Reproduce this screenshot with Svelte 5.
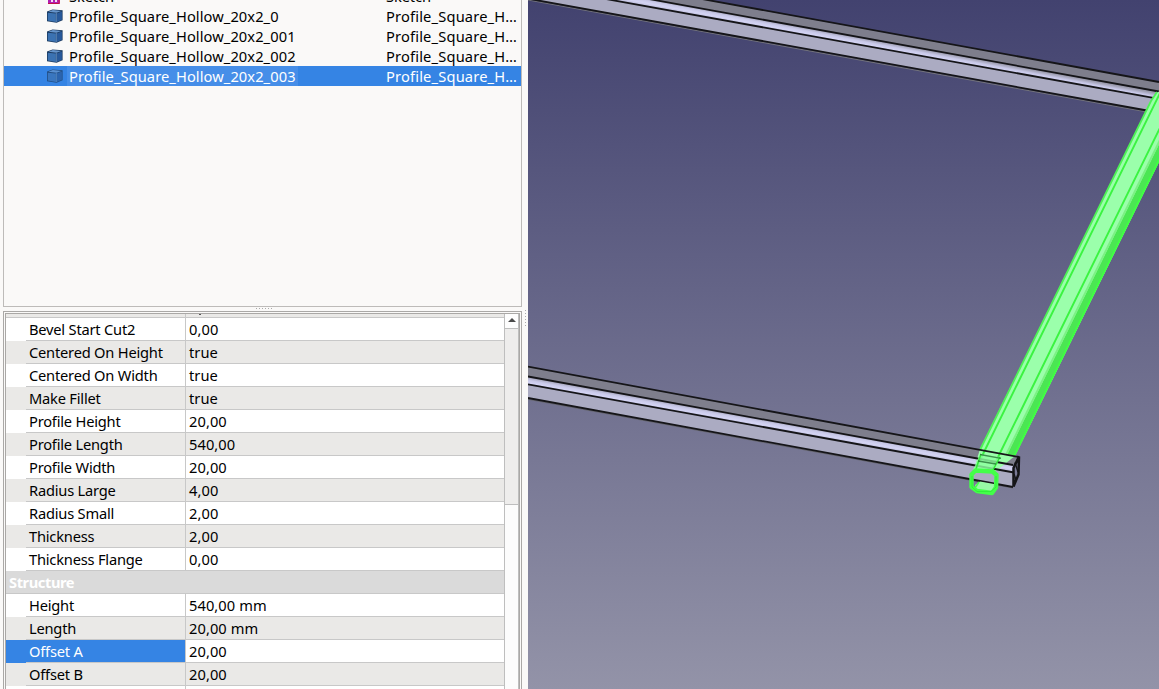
<script>
  const tree = [
    { name: 'Sketch', kind: 'sketch' },
    { name: 'Profile_Square_Hollow_20x2_0' },
    { name: 'Profile_Square_Hollow_20x2_001' },
    { name: 'Profile_Square_Hollow_20x2_002' },
    { name: 'Profile_Square_Hollow_20x2_003', selected: true }
  ];
  const rows = [
    ['Bevel Start Cut2', '0,00'],
    ['Centered On Height', 'true'],
    ['Centered On Width', 'true'],
    ['Make Fillet', 'true'],
    ['Profile Height', '20,00'],
    ['Profile Length', '540,00'],
    ['Profile Width', '20,00'],
    ['Radius Large', '4,00'],
    ['Radius Small', '2,00'],
    ['Thickness', '2,00'],
    ['Thickness Flange', '0,00'],
    ['Structure'],
    ['Height', '540,00 mm'],
    ['Length', '20,00 mm'],
    ['Offset A', '20,00'],
    ['Offset B', '20,00'],
    ['', '']
  ];
</script>

<div class="app">
  <div class="side">
    <div class="tree">
      {#each tree as t}
        <div class="item" class:sel={t.selected}>
          <div class="ico">
            {#if t.kind === 'sketch'}
              <svg width="16" height="16" viewBox="0 0 16 16">
                <rect x="1" y="2" width="12" height="14" rx="1" fill="#b01fb5" />
                <path d="M1 15.500H12.500" stroke="#c01048" />
                <path d="M4 11h2v3H4zM8 11h2v3H8z" fill="#f4dcf5" />
                <path d="M12 9v6" stroke="#d8203a" />
              </svg>
            {:else}
              <svg width="16" height="16" viewBox="0 0 16 16" class:dim={t.selected}>
                <path d="M0 3.500 5.500 1.400 15.600 2.300V12.200L9.600 14.800 0 13.300z" fill="#1b3a60" />
                <path d="M1.300 3.800 5.900 2 14.300 2.900 9.500 4.700z" fill="#6695cc" />
                <path d="M.8 4.700 8.800 5.500v8.400L.8 12.600z" fill="#3b72b2" />
                <path d="M9.800 5.500 14.900 3.500v8.300L9.800 13.900z" fill="#28599a" />
                <path d="M9.300 5v9" stroke="#7ea8d8" stroke-width=".7" />
              </svg>
            {/if}
          </div>
          <span class="name">{t.name}</span>
          <span class="desc">{t.kind ? 'Sketch' : 'Profile_Square_H…'}</span>
        </div>
      {/each}
    </div>
    <div class="hsplit">{#each Array(6) as _}<i></i>{/each}</div>
    <div class="props">
      <div class="inner">
        <div class="table">
          <div class="sliver"><span></span><b></b></div>
          {#each rows as [k, v], i}
            {#if v === undefined}
              <div class="group">{k}</div>
            {:else}
              <div class="row" class:alt={i % 2 === 1} class:cur={k === 'Offset A'}>
                <div class="indent"></div>
                <div class="key">{k}</div>
                <div class="val">{v}</div>
              </div>
            {/if}
          {/each}
        </div>
        <div class="scroll">
          <div class="up"><svg width="8" height="4" viewBox="0 0 8 4"><path d="M4 0 8 4H0z" fill="#4a4a4a" /></svg></div>
          <div class="thumb"></div>
          <div class="track"></div>
        </div>
      </div>
    </div>
  </div>
  <div class="vsplit">{#each Array(6) as _}<i></i>{/each}</div>
  <svg class="view" width="631" height="689" viewBox="528 0 631 689">
    <defs>
      <linearGradient id="sky" x1="0" y1="0" x2="0" y2="1">
        <stop offset="0" stop-color="#42426f" />
        <stop offset="1" stop-color="#9393a8" />
      </linearGradient>
      <linearGradient id="shine" gradientUnits="userSpaceOnUse" x1="700" y1="407" x2="698.4" y2="416">
        <stop offset="0" stop-color="#9b9bad" />
        <stop offset=".4" stop-color="#c8c8e8" />
        <stop offset=".7" stop-color="#d4d4f4" />
        <stop offset="1" stop-color="#bdbdda" />
      </linearGradient>
      <linearGradient id="shine2" gradientUnits="userSpaceOnUse" x1="800" y1="26" x2="798.4" y2="34.5">
        <stop offset="0" stop-color="#9b9bad" />
        <stop offset=".4" stop-color="#c8c8e8" />
        <stop offset=".7" stop-color="#d4d4f4" />
        <stop offset="1" stop-color="#bdbdda" />
      </linearGradient>
    </defs>
    <rect x="528" width="631" height="689" fill="url(#sky)" />

    <path d="M706 0 1159 82V92L654 0z" fill="#7e7e8c" />
    <path d="M654 0 1159 92V99L611 0z" fill="url(#shine2)" />
    <path d="M611 0 1159 99V112.500L536 0z" fill="#ababc2" />
    <g stroke="#151518" stroke-width="1.8" fill="none">
      <path d="M528 0 1148 112.200" stroke="#73737a" stroke-width="1" />
      <path d="M702-1 1159 82M649-1 1159 91.500M606-1 1159 98.800M530-1 1147 110.500" />
    </g>

    <path d="M528 366.700 1019 457 1013 465 528 376.500z" fill="#7e7e8c" />
    <path d="M528 376.500 1013 465V472.500L528 384.300z" fill="url(#shine)" />
    <path d="M528 384.300 1013 472.500V487L528 398z" fill="#ababc2" />
    <path d="M528 399.300 1013 488" stroke="#65656d" />

    <path d="M1162 89 1157 93 1151 101 980 449 974 469 996 471 1015 456 1162 156z" fill="#9bffab" />
    <path d="M1162 138 1007 455 1015 456 1162 153z" fill="#4be653" />
    <path d="M1162 136 1006 455" stroke="#7cf184" stroke-width="2" />
    <path d="M1157 92 1151 101 980 450" fill="none" stroke="#4df255" stroke-width="1.800" />
    <path d="M1162 154 1014.500 455" stroke="#3fff42" stroke-width="2" />
    <path d="M1162 89 984 452 976 469M1162 123.700 1000 453 992 470" fill="none" stroke="#3bf341" stroke-width="1.900" />

    <g stroke="#151518" stroke-width="1.800" fill="none">
      <path d="M528 366.700 1019 457M528 376.500 1013 465M528 384.300 1014 472.500M528 398 1013 487" />
      <path d="M1019 456.500 1013.500 468V486.500L1018.500 474.500z" stroke-width="2.500" />
      <path d="M1015 462.500 1018 472M1014 474 1016 480" stroke-width="1.400" />
    </g>
    <path d="M980 454 1000 457 992 471 973 470z" fill="#8effa0" fill-opacity=".82" />
    <path d="M981 454 976 469M1000 457 993 470" stroke="#32e93b" stroke-width="1.500" />
    <path d="M980 454.500 1001 458.400M978 461 996 464" stroke="#236b30" stroke-width="1.300" stroke-opacity=".75" />
    <path d="M975 485 980 481.500 994 484V491H977z" fill="#98f9a6" />
    <g fill="none" stroke="#43ff49" stroke-linejoin="round">
      <path d="M975.500 470.500 992.500 471.500 996.500 475 996 487.500 992 493 977 491 971.500 487V474.500z" stroke-width="4.400" />
      <path d="M979 482 975 488" stroke-width="1.500" />
    </g>
    <path d="M972 476V487L977 491.500H991L996 487V476" fill="none" stroke="#2ceb35" stroke-width=".8" />
  </svg>
</div>

<style>
  .app { display: flex; width: 1159px; height: 689px; overflow: hidden; background: #faf9f8; font: 14.67px/20px "Noto Sans", sans-serif; color: #000; }
  .side { width: 519px; padding-left: 3px; display: flex; flex-direction: column; flex: none; }
  .tree { height: 307px; box-sizing: border-box; border: 1px solid #bdbbb9; border-top: 0; overflow: hidden; flex: none; background: #faf9f8; }
  .item { display: grid; grid-template-columns: 43px 22px 317px 1fr; height: 20px; white-space: nowrap; }
  .item:first-child { margin-top: -14px; }
  .ico { grid-column: 2; padding-top: 2px; line-height: 0; }
  .dim { opacity: .72; }
  .name { justify-self: start; height: 20px; letter-spacing: .08px; }
  .desc { letter-spacing: .17px; }
  .item:first-child span { letter-spacing: -.1px; }
  .sel { background: #3584e4; color: #fff; }
  .sel .name { background: #468ee8; box-shadow: -2px 0 #468ee8, 2px 0 #468ee8; }
  .hsplit { height: 4px; display: flex; justify-content: center; gap: 2px; padding-top: 1px; box-sizing: border-box; padding-left: 3px; }
  i { width: 1px; height: 1px; background: #aaa; flex: none; }
  .props { flex: 1; min-height: 0; border: 1px solid #aaa8a6; border-bottom: 0; padding: 1px 1px 0; }
  .inner { border: 1px solid #aaa8a6; border-bottom: 0; height: 375px; display: flex; overflow: hidden; background: #fff; }
  .table { width: 498px; flex: none; }
  .sliver { height: 4px; box-sizing: border-box; background: #eae9e7; border-bottom: 1px solid #c8c8c8; display: flex; }
  .sliver span { width: 179px; border-right: 1px solid #c8c8c8; }
  .sliver b { width: 2px; height: 1px; background: #555; margin-left: 13px; }
  .row { display: flex; height: 23px; line-height: 23px; }
  .indent { width: 20px; }
  .key { width: 159px; padding-left: 3px; box-sizing: border-box; border-bottom: 1px solid #c8c8c8; letter-spacing: -.21px; }
  .val { flex: 1; padding-left: 3px; border-bottom: 1px solid #c8c8c8; border-left: 1px solid #c8c8c8; letter-spacing: .07px; }
  .alt { background: #eae9e7; }
  .cur .indent, .cur .key { background: #3584e4; color: #fff; }
  .group { height: 23px; box-sizing: border-box; border-bottom: 1px solid #c8c8c8; background: #dadada; color: #fff; font-weight: 700; padding-left: 3px; line-height: 23px; letter-spacing: -.42px; }
  .scroll { width: 13px; border-left: 1px solid #bebebe; border-right: 1px solid #bebebe; display: flex; flex-direction: column; }
  .up { height: 15px; background: #fdfdfd; border-bottom: 1px solid #bebebe; display: flex; justify-content: center; padding-top: 4px; box-sizing: border-box; }
  .thumb { height: 176px; background: #eeedec; border-bottom: 1px solid #bebebe; box-sizing: border-box; }
  .track { flex: 1; background: #fcfcfc; }
  .vsplit { width: 6px; display: flex; flex-direction: column; gap: 2px; align-items: center; padding-top: 310px; box-sizing: border-box; }
  .view { display: block; flex: none; }
</style>
